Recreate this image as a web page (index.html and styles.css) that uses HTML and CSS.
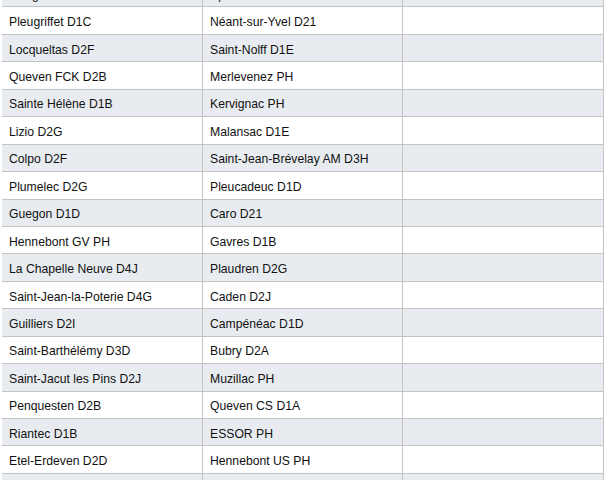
FILE: index.html
```html
<!DOCTYPE html>
<html lang="fr">
<head>
<meta charset="utf-8">
<link rel="stylesheet" href="styles.css">
</head>
<body>
<div class="table">
  <div class="row alt"><div class="cell">Guégon Jeunes D3A</div><div class="cell">Sp Ploërmel D2C</div><div class="cell"></div></div>
  <div class="row"><div class="cell">Pleugriffet D1C</div><div class="cell">Néant-sur-Yvel D21</div><div class="cell"></div></div>
  <div class="row alt"><div class="cell">Locqueltas D2F</div><div class="cell">Saint-Nolff D1E</div><div class="cell"></div></div>
  <div class="row"><div class="cell">Queven FCK D2B</div><div class="cell">Merlevenez PH</div><div class="cell"></div></div>
  <div class="row alt"><div class="cell">Sainte Hélène D1B</div><div class="cell">Kervignac PH</div><div class="cell"></div></div>
  <div class="row"><div class="cell">Lizio D2G</div><div class="cell">Malansac D1E</div><div class="cell"></div></div>
  <div class="row alt"><div class="cell">Colpo D2F</div><div class="cell">Saint-Jean-Brévelay AM D3H</div><div class="cell"></div></div>
  <div class="row"><div class="cell">Plumelec D2G</div><div class="cell">Pleucadeuc D1D</div><div class="cell"></div></div>
  <div class="row alt"><div class="cell">Guegon D1D</div><div class="cell">Caro D21</div><div class="cell"></div></div>
  <div class="row"><div class="cell">Hennebont GV PH</div><div class="cell">Gavres D1B</div><div class="cell"></div></div>
  <div class="row alt"><div class="cell">La Chapelle Neuve D4J</div><div class="cell">Plaudren D2G</div><div class="cell"></div></div>
  <div class="row"><div class="cell">Saint-Jean-la-Poterie D4G</div><div class="cell">Caden D2J</div><div class="cell"></div></div>
  <div class="row alt"><div class="cell">Guilliers D2I</div><div class="cell">Campénéac D1D</div><div class="cell"></div></div>
  <div class="row"><div class="cell">Saint-Barthélémy D3D</div><div class="cell">Bubry D2A</div><div class="cell"></div></div>
  <div class="row alt"><div class="cell">Saint-Jacut les Pins D2J</div><div class="cell">Muzillac PH</div><div class="cell"></div></div>
  <div class="row"><div class="cell">Penquesten D2B</div><div class="cell">Queven CS D1A</div><div class="cell"></div></div>
  <div class="row alt"><div class="cell">Riantec D1B</div><div class="cell">ESSOR PH</div><div class="cell"></div></div>
  <div class="row"><div class="cell">Etel-Erdeven D2D</div><div class="cell">Hennebont US PH</div><div class="cell"></div></div>
  <div class="row alt"><div class="cell">Ploërmel D2A</div><div class="cell">Baud D1C</div><div class="cell"></div></div>
</div>
</body>
</html>
```
FILE: styles.css
```css
html, body {
  margin: 0;
  padding: 0;
  background: #ffffff;
  overflow: hidden;
}
.table {
  margin-left: 2px;
  margin-top: -20px;
  width: 602px;
  font-family: "Liberation Sans", Arial, sans-serif;
  font-size: 12.2px;
  color: #111111;
}
.row {
  display: grid;
  grid-template-columns: 201px 200px 201px;
  height: 27.45px;
  box-sizing: border-box;
  border-bottom: 1px solid #c4c4c4;
  background: #ffffff;
}
.row.alt {
  background: #e8ecf0;
}
.cell {
  box-sizing: border-box;
  border-right: 1px solid #c4c4c4;
  padding-left: 7px;
  padding-top: 3px;
  display: flex;
  align-items: center;
  white-space: nowrap;
  overflow: hidden;
}
```
